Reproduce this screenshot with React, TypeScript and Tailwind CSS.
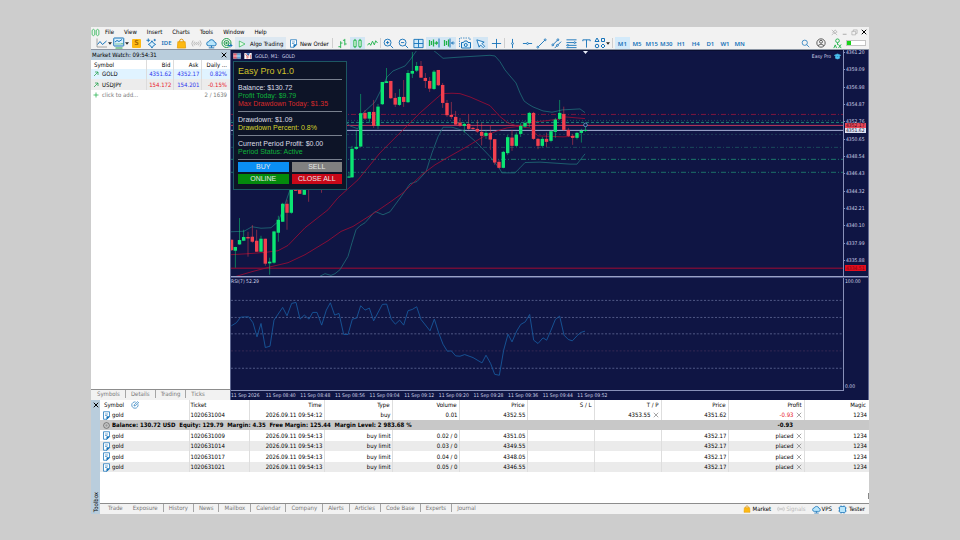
import React from "react";

type Kids = { children?: React.ReactNode };

/* ---------- icons ---------- */

function Icon({ children, className = "size-[11px]" }: Kids & { className?: string }) {
  return (
    <svg viewBox="0 0 24 24" fill="none" stroke="currentColor" strokeWidth={2} className={`shrink-0 ${className}`} aria-hidden="true">
      {children}
    </svg>
  );
}

const Caret = () => (
  <svg viewBox="0 0 8 5" className="h-[3px] w-[4px] shrink-0 text-neutral-800" aria-hidden="true">
    <path d="M0 0h8L4 5z" fill="currentColor" />
  </svg>
);

const Bag = ({ className }: { className?: string }) => (
  <Icon className={className}>
    <path d="M8 9V6.500a4 4 0 0 1 8 0V9" stroke="#d98e00" />
    <path d="M4 8h16l1 14H3z" fill="#fdb913" stroke="#e39b00" strokeWidth={1.500} />
  </Icon>
);

const Cloud = ({ className }: { className?: string }) => (
  <Icon className={className}>
    <path d="M6 17a4.500 4.500 0 0 1 0-9 6.500 6.500 0 0 1 12.500 1A4 4 0 0 1 18 17z" fill="#b9e6fb" stroke="#1673b9" />
    <path d="M12 17v4M6 21.500h12" stroke="#1673b9" />
  </Icon>
);

const DocIcon = () => (
  <Icon className="size-[9px] text-[#1673b9]">
    <path d="M4 2h16v13l-7 7H4z" fill="#fff" />
    <path d="M8 8h8M8 12h6" strokeWidth={1.600} />
    <path d="M20 15l-7 7v-7z" fill="#1673b9" />
  </Icon>
);

const Signal = ({ className }: { className?: string }) => (
  <Icon className={className}>
    <circle cx="12" cy="12" r="2" />
    <path d="M8 8a6 6 0 0 0 0 8M16 8a6 6 0 0 1 0 8M4.500 5.500a10 10 0 0 0 0 13M19.500 5.500a10 10 0 0 1 0 13" />
  </Icon>
);

const Cross = () => (
  <Icon className="size-[6px]">
    <path d="M3 3l18 18M21 3L3 21" strokeWidth={4} />
  </Icon>
);

function Tool({ label, active, wide, children }: Kids & { label: string; active?: boolean; wide?: boolean }) {
  return (
    <button
      type="button"
      aria-label={label}
      className={`flex h-[12px] items-center justify-center ${wide ? "w-[17px]" : "w-[15px]"} ${active ? "bg-[#d3e6f4]" : ""}`}
    >
      {children}
    </button>
  );
}

const Sep = () => <span className="h-[10px] w-px bg-[#cfcfcf]" />;

/* ---------- menu and toolbar ---------- */

const menus = ["File", "View", "Insert", "Charts", "Tools", "Window", "Help"];
const frames = ["M1", "M5", "M15", "M30", "H1", "H4", "D1", "W1", "MN"];

function MenuBar() {
  return (
    <nav className="flex h-[10px] items-center bg-[#f2f2f2] pr-[2px] text-black">
      <Icon className="mr-[5px] size-[9px] text-[#21b24b]">
        <path d="M3 6q4-5 7 0v12q-4 5-7 0zM14 6q4-5 7 0v12q-4 5-7 0z" />
      </Icon>
      <div className="flex gap-[10px]">
        {menus.map((m) => (
          <button key={m} type="button">{m}</button>
        ))}
      </div>
      <div className="ml-auto flex items-center gap-[3px]">
        <button type="button" aria-label="Pin" className="text-neutral-400">
          <Icon className="size-[7px]"><path d="M3 3l18 18M14 3l7 7-5 2-4 5-6-6 5-3zM8 15l-5 6" /></Icon>
        </button>
        <button type="button" aria-label="Minimize" className="text-neutral-400">
          <Icon className="size-[7px]"><path d="M6 18h13" strokeWidth={3} /></Icon>
        </button>
        <button type="button" aria-label="Restore" className="text-neutral-400">
          <Icon className="size-[7px]"><path d="M3 8h13v12H3zM8 8V3h13v12h-5" /></Icon>
        </button>
        <button type="button" aria-label="Close" className="text-black"><Cross /></button>
      </div>
    </nav>
  );
}

function Toolbar() {
  return (
    <div className="flex h-[13px] items-center border-b border-[#8b95a3] bg-[#f2f2f2] text-[#1673b9]">
      <div className="ml-[4px] flex items-center">
        <Tool label="Line studies" wide>
          <Icon className="size-[12px]"><path d="M2 3v17h20" stroke="#888" strokeWidth={1.500} /><path d="M3 15l5-6 5 6 8-7" /></Icon>
          <Caret />
        </Tool>
        <Tool label="Chart templates" wide>
          <Icon className="size-[12px]"><rect x="1.500" y="2" width="20" height="16" rx="1" fill="#d9effb" /><path d="M4 10l4-3 4 2 6-4" /><path d="M5 22h14M6 15v-2M10 15v-2M14 15v-2M18 15v-3" stroke="#21a04b" /></Icon>
          <Caret />
        </Tool>
        <Tool label="Symbols">
          <span className="flex size-[9px] items-center justify-center rounded-[1px] bg-[#fdb913] text-[7px] leading-none font-bold text-[#a86a00]">S</span>
        </Tool>
        <Tool label="Settings">
          <Icon><path d="M13 6l3 5 5 3-5 3-3 5-3-5-5-3 5-3z" fill="#d9effb" /><path d="M5 1v8M1 5h8M19 2v5M16.500 4.500h5" /></Icon>
        </Tool>
        <Tool label="MetaEditor IDE"><span className="font-['Noto_Sans',sans-serif] font-semibold">IDE</span></Tool>
        <Tool label="Market"><Bag className="size-[11px]" /></Tool>
        <Tool label="Signals"><span className="text-[#b5b5b5]"><Signal className="size-[11px]" /></span></Tool>
        <Tool label="Virtual hosting"><Cloud className="size-[11px]" /></Tool>
        <Tool label="Copy trading">
          <Icon className="size-[12px] text-[#21a04b]"><circle cx="11" cy="12" r="9" /><circle cx="11" cy="12" r="5" /><circle cx="11" cy="12" r="1.500" fill="currentColor" /><path d="M13 17h9M18 13l4 4-4 4" stroke="#1673b9" /></Icon>
        </Tool>
      </div>
      <button type="button" className="ml-px flex h-[12px] w-[51px] items-center gap-[4px] bg-[#dde8f1] pt-px pl-[3px] whitespace-nowrap text-black">
        <Icon className="size-[8px] text-[#21b24b]"><path d="M4 3l17 9-17 9z" fill="#e5fbe9" /></Icon>
        Algo Trading
      </button>
      <button type="button" className="ml-px flex h-[12px] w-[45px] items-center gap-[2px] pt-px pl-[2px] whitespace-nowrap text-black">
        <DocIcon />
        New Order
      </button>
      <Sep />
      <div className="ml-[2px] flex items-center">
        <Tool label="Bar chart"><Icon className="size-[11px] text-[#21b24b]"><path d="M8 7v15M3 19h5M8 11h4M17 2v14M13 5h4M17 13h4" /></Icon></Tool>
        <Tool label="Candlestick chart" active><Icon className="size-[11px] text-[#21b24b]"><path d="M4 5h5v14H4zM15 5h5v14h-5zM6.500 2v3M6.500 19v3M17.500 2v3M17.500 19v3" fill="#e5fbe9" /></Icon></Tool>
        <Tool label="Line chart"><Icon className="size-[11px] text-[#21b24b]"><path d="M1 16l4-5 3 5 4-9 4 8 3-9 4 5" /></Icon></Tool>
        <Sep />
        <Tool label="Zoom in"><Icon><circle cx="10" cy="10" r="7.500" /><path d="M16 16l6 6M6.500 10h7M10 6.500v7" /></Icon></Tool>
        <Tool label="Zoom out"><Icon><circle cx="10" cy="10" r="7.500" /><path d="M16 16l6 6M6.500 10h7" /></Icon></Tool>
        <Tool label="Tile windows"><Icon><path d="M2 3h20v18H2zM12 3v18M2 12h20" fill="#cfeafa" /></Icon></Tool>
        <Tool label="Auto scroll" active><Icon className="size-[12px] text-[#21b24b]"><path d="M3 6v12M7 8v8M11 5v14M13 12h6M16 9l3 3-3 3" strokeWidth={2.500} /><path d="M22 3v18" stroke="#1673b9" /></Icon></Tool>
        <Tool label="Chart shift" active><Icon className="size-[12px] text-[#21b24b]"><path d="M3 6v12M7 8v8M11 5v14" strokeWidth={2.500} /><path d="M14 3v18M23 12h-6M20 9l-3 3 3 3" stroke="#1673b9" /></Icon></Tool>
      </div>
      <div className="ml-px flex items-center gap-px">
        <Tool label="Screenshot"><Icon className="size-[12px]"><path d="M1 20V2h21v5" strokeDasharray="3 2" strokeWidth={1.500} /><path d="M5 11h4l2-3h5l2 3h5v11H5z" fill="#d9effb" /><circle cx="13.500" cy="16" r="3" /></Icon></Tool>
        <Tool label="Cursor" active><Icon><path d="M4 4l16 5-5 3 6 6-3 3-6-6-3 5z" fill="#eaf6fd" /></Icon></Tool>
        <Tool label="Crosshair"><Icon><path d="M12 2v20M2 12h20" /></Icon></Tool>
      </div>
      <Sep />
      <div className="grid w-[103px] grid-cols-7">
        <Tool label="Vertical line"><Icon><path d="M12 2v20" /><circle cx="12" cy="12" r="2" fill="#fff" /></Icon></Tool>
        <Tool label="Horizontal line"><Icon><path d="M2 12h20" /><circle cx="12" cy="12" r="2" fill="#fff" /></Icon></Tool>
        <Tool label="Trend line"><Icon><path d="M3 21L21 3" /><circle cx="4" cy="20" r="2" fill="#fff" /><circle cx="20" cy="4" r="2" fill="#fff" /></Icon></Tool>
        <Tool label="Channel"><Icon><path d="M2 17L16 3M8 22L22 8" /><circle cx="4" cy="15" r="2" fill="#fff" /><circle cx="15" cy="4" r="2" fill="#fff" /><circle cx="14" cy="16" r="2" fill="#fff" /></Icon></Tool>
        <Tool label="Fibonacci"><Icon><path d="M1 4h22M1 10h22M1 16h22M1 21h22" /><circle cx="4" cy="16" r="1.800" fill="#fff" /><circle cx="19" cy="10" r="1.800" fill="#fff" /></Icon></Tool>
        <Tool label="Text"><Icon><path d="M4 7V4h16v3M12 4v17" /></Icon></Tool>
        <Tool label="Shapes" wide>
          <Icon className="size-[12px]"><path d="M6 2l4 7H2zM15 3h6v6h-6z" strokeWidth={2} /><circle cx="6" cy="18" r="3.500" strokeWidth={2} /><path d="M18 14l4 4-4 4-4-4z" strokeWidth={2} /></Icon>
          <Caret />
        </Tool>
      </div>
      <span className="ml-[4px] flex"><Sep /></span>
      <div className="ml-[2px] grid w-[132px] grid-cols-9 font-['Noto_Sans',sans-serif] font-semibold">
        {frames.map((f) => (
          <button key={f} type="button" className={`h-[12px] pt-px text-center ${f === "M1" ? "bg-[#d3eafa]" : ""}`}>{f}</button>
        ))}
      </div>
      <div className="ml-auto flex items-center pr-[3px]">
        <Tool label="Search"><Icon className="size-[9px]"><circle cx="10" cy="10" r="7" /><path d="M15 15l7 7" /></Icon></Tool>
        <Tool label="Account"><Icon className="size-[10px] text-neutral-700"><circle cx="12" cy="12" r="10" /><circle cx="12" cy="9" r="3.500" /><path d="M5 18q7-7 14 0" /></Icon></Tool>
        <span className="mr-[3px] ml-[4px] flex text-[#21b24b]">
          <Icon className="size-[11px]"><circle cx="12" cy="6" r="4" /><path d="M12 10v5M4 22l3-7 3 7M14 14l6 8M20 14l-6 8" /></Icon>
        </span>
        <span className="flex h-[6px] w-[20px] border border-[#c4c4c4] bg-white">
          <span className="w-[4px] bg-[#19d319]" />
        </span>
      </div>
    </div>
  );
}

/* ---------- market watch ---------- */

function MarketWatch() {
  return (
    <aside className="flex w-[139px] shrink-0 flex-col bg-white text-black">
      <header className="flex h-[10px] items-center justify-between bg-[#b9cddc] pr-[3px] pl-px">
        <h2>Market Watch: 09:54:31</h2>
        <button type="button" aria-label="Close Market Watch"><Cross /></button>
      </header>
      <table className="w-full table-fixed border-collapse">
        <colgroup>
          <col className="w-[55px]" /><col className="w-[27px]" /><col className="w-[28px]" /><col className="w-[29px]" />
        </colgroup>
        <thead>
          <tr className="h-[9px] text-right">
            <th className="border-r border-[#dcdcdc] p-0 pl-[3px] text-left font-normal">Symbol</th>
            <th className="border-r border-[#dcdcdc] p-0 pr-[2px] font-normal">Bid</th>
            <th className="border-r border-[#dcdcdc] p-0 pr-[2px] font-normal">Ask</th>
            <th className="p-0 pr-[3px] font-normal whitespace-nowrap">Daily ...</th>
          </tr>
        </thead>
        <tbody className="text-right">
          <tr className="h-[10px] bg-[#e0f3ff] text-[#2a35ee]">
            <td className="border-r border-[#dcdcdc] text-left text-black"><SymbolCell name="GOLD" /></td>
            <td className="border-r border-[#dcdcdc] pr-px">4351.62</td>
            <td className="border-r border-[#dcdcdc] pr-px">4352.17</td>
            <td className="pr-[3px]">0.82%</td>
          </tr>
          <tr className="h-[11px] bg-[#ececec] text-[#e8182a]">
            <td className="border-r border-[#dcdcdc] text-left text-black"><SymbolCell name="USDJPY" /></td>
            <td className="border-r border-[#dcdcdc] pr-px">154.172</td>
            <td className="border-r border-[#dcdcdc] pr-px text-[#2a35ee]">154.201</td>
            <td className="pr-[3px]">-0.15%</td>
          </tr>
          <tr className="h-[10px] text-[#777]">
            <td className="text-left">
              <span className="flex items-center gap-[3px] pl-[2px]">
                <Icon className="size-[6px] text-[#21b24b]"><path d="M12 2v20M2 12h20" strokeWidth={3} /></Icon>
                click to add...
              </span>
            </td>
            <td colSpan={3} className="pr-[3px]">2 / 1639</td>
          </tr>
        </tbody>
      </table>
      <div className="mt-auto flex h-[11px] items-center border-t border-[#8d8d8d] bg-[#f2f2f2] pb-[2px] pl-px text-[#777]">
        {["Symbols", "Details", "Trading", "Ticks"].map((t, i) => (
          <button key={t} type="button" className={`h-[8px] px-[5px] ${i < 3 ? "border-r border-[#a5a5a5]" : ""}`}>{t}</button>
        ))}
      </div>
    </aside>
  );
}

function SymbolCell({ name }: { name: string }) {
  return (
    <span className="flex items-center gap-[3px] pl-[2px]">
      <Icon className="size-[6px] text-[#21a04b]"><path d="M4 20L20 4M8 4h12v12" strokeWidth={3} /></Icon>
      {name}
    </span>
  );
}

/* ---------- chart ---------- */

// Each bar: centre x, body top, body bottom, wick top, wick bottom, 1 for a rising bar
const bars: [number, number, number, number, number, number][] = [
  [231.5, 240, 250.5, 240, 251, 0], [235.3, 247.3, 251, 247, 268, 1], [239.5, 240.3, 244.7, 218.3, 245, 1],
  [243.7, 237.3, 241, 230, 241, 1], [248, 237.3, 238.7, 232, 257, 0], [252.3, 237, 242, 225.3, 243, 0],
  [256.7, 241, 252, 230, 252, 0], [261, 239, 252, 236, 252, 1], [265.3, 239, 264, 239, 266, 0],
  [269.7, 262, 263.7, 258, 275, 1], [274, 231.7, 263, 231, 264, 1], [278.3, 220, 233, 216, 242, 1],
  [282.7, 204, 222, 203, 222, 1], [287, 204, 213, 200, 230, 0], [291.3, 188, 213, 188, 214, 1],
  [295.7, 188, 191, 188, 191, 0], [299.7, 188, 194, 188, 194, 0], [304.3, 188, 195, 188, 195, 1],
  [308.7, 188, 189, 188, 202, 0], [321.5, 188, 189, 188, 193, 0], [349, 176.7, 177.8, 172, 178, 1],
  [352, 149, 177.5, 146, 178, 1], [356.3, 147, 149, 131, 150, 1], [360.7, 113.3, 146.7, 94, 147, 1],
  [365, 113, 118.7, 110, 120, 0], [369.3, 112, 118.7, 112, 123, 1], [373.7, 112, 126, 100, 128, 0],
  [378, 106.7, 126, 104, 129, 1], [382.3, 82, 104.3, 82, 105, 1], [386.5, 81.3, 83, 68, 83, 1],
  [390.8, 81, 98.3, 81, 99, 0], [395.2, 98, 104.7, 93, 107, 0], [399.4, 97, 105, 89, 106, 1],
  [403.7, 97, 102, 80, 107, 0], [408, 73, 102.3, 70, 103, 1], [412.3, 71, 73.7, 52, 78, 1],
  [416.7, 66, 70.7, 62, 72, 1], [421, 66, 77.7, 61, 78, 0], [425.3, 78, 81, 73, 88, 0],
  [429.7, 81, 88.7, 77, 92, 0], [434, 71.7, 89, 70, 90, 1], [438.3, 70, 85.3, 70, 86, 0],
  [442.7, 85, 103, 83, 108, 0], [447, 103, 115.3, 100, 117, 0], [451.3, 115, 117, 102, 119, 0],
  [455.7, 117, 124.7, 111, 125, 0], [460, 122.7, 125.7, 118, 127, 0], [464.3, 124, 126, 122.5, 132.5, 1],
  [468.7, 124, 129, 114, 130, 0], [473, 128, 129.2, 127, 130, 0], [477.3, 129, 131.7, 120, 133, 0],
  [481.7, 132, 136, 123, 145.5, 0], [486, 133, 136, 130, 139, 1], [490.3, 133, 139.7, 126, 150, 0],
  [494.7, 139.3, 162.7, 139, 165, 0], [499, 162, 168, 160, 168.5, 0], [503.3, 152, 168, 151, 168.5, 1],
  [507.7, 137.3, 153.3, 135, 155, 1], [512, 137.7, 146, 130, 151, 0], [516.3, 134.7, 146, 132.5, 147, 1],
  [520.7, 126, 134, 123, 137, 1], [525, 123, 126.7, 121, 128, 1], [529.3, 113, 123.3, 112, 127, 1],
  [533.5, 113, 139, 112, 140, 0], [538, 139, 146, 138, 149.3, 0], [542.3, 139, 146, 137, 148, 1],
  [546.5, 139, 142, 132.7, 147, 0], [551, 131.3, 141, 130, 142.5, 1], [555.3, 119.7, 132, 118, 138, 1],
  [559.7, 113, 119, 100, 120, 1], [563.8, 114, 130, 106.7, 131, 0], [568.3, 130, 136, 128, 137, 0],
  [572.7, 136, 138, 134, 145, 0], [577, 133, 138, 132, 139.5, 1], [581.3, 131, 133, 129, 142.7, 1],
  [585.5, 130, 131, 126, 132, 1],
];

const upperBand =
  "231,232 244,231.5 252,227 261,228.5 271,228 278,222 283,210 290,190 330,150 347,123 350,126 358,129 361,115 375,102 381,90 387,77 393,71 405,66 410,60 417,50";
const upperBand2 =
  "433,50 438,54 443,58.3 457,57.3 490,55.3 495,56 500,61.7 505,70 510,76 516,83 520,93 524,101 528,104 533,107 543,111 552,112.3 558,111 562,110 580,109 585,112.7";
const lowerBand =
  "319.7,276.700 325,274 331,275.700 335,274 340,270 348,256.700 352,243 356,230 360,226 365,223 375,211.700 383,215 390,212 401,197 410,184 417,181.700 426,172 432,153 438,137 443,127.300 452,127.300 463,130.700 477,143 490,156.700 499,168 502,173 515,173 520,168 525,162.700 540,162.300 570,164.300 577,164.300 585,154";
const fastAverage =
  "231,255 248,254 265,252.700 278,251 288,245.700 305,228 328,210 338,198 358,180 380,153 400,133 420,113 437,98 442,93.700 452,93.300 460,93.700 470,97 490,105.700 500,116.700 508,123 517,126 525,125 533,122 545,121 560,119 565,117 585,118.700";
const slowAverage =
  "236,276.700 253,271.700 271,267 288,263 305,255 328,241 341,231.700 353,226.700 375,212.700 391,201.700 403,193 421.700,175 435,165 447,158 467,146.700 483,137 497,131 507,128 517,126.700 530,128 538,136 563,137 580,136";

const levels = [
  { y: 114.5, color: "#7d153e", dash: "5 2 1 2" },
  { y: 120.5, color: "#24475f", dash: "1 2" },
  { y: 122.5, color: "#1c8a74", dash: "3 2" },
  { y: 125.5, color: "#c0385c", dash: "" },
  { y: 130.5, color: "#a9b2d6", dash: "" },
  { y: 134.5, color: "#1d3a55", dash: "2 2" },
  { y: 147.5, color: "#1b4a5c", dash: "4 2 1 2" },
  { y: 159.5, color: "#1c766c", dash: "5 2 1 2" },
  { y: 172.5, color: "#1c6e68", dash: "5 2 1 2" },
  { y: 268.5, color: "#a30b33", dash: "" },
];

const rsiShape = [
  10, 167, 25, 158, 38, 141, 62, 140, 75, 158, 87, 200, 99, 160, 112, 232, 126, 228, 138, 150, 164, 112, 177, 137, 191, 100,
  204, 97, 216, 147, 229, 135, 243, 147, 254, 127, 267, 127, 281, 165, 295, 120, 307, 98, 320, 135, 333, 130, 347, 193,
  360, 193, 373, 147, 386, 144, 398, 107, 411, 120, 424, 114, 437, 152, 463, 103, 476, 102, 490, 148, 502, 162, 515, 150,
  527, 165, 540, 122, 553, 118, 566, 110, 579, 148, 606, 182, 619, 147, 632, 188, 645, 222, 658, 243, 670, 242, 683, 257,
  696, 258, 710, 253, 735, 262, 762, 278, 774, 255, 788, 280, 800, 312, 814, 315, 827, 240, 840, 192, 852, 215, 866, 183,
  878, 163, 892, 155, 905, 133, 917, 210, 930, 220, 945, 203, 956, 210, 969, 180, 982, 148, 995, 138, 1008, 195, 1021, 208,
  1033, 212, 1048, 196, 1058, 187, 1071, 183,
];
const rsiLine = rsiShape.map((v, i) => (i % 2 ? `${v} ` : `${v},`)).join("");

const prices = ["4361.20", "4359.09", "4356.98", "4354.87", "4352.76", "4350.65", "4348.54", "4346.43", "4344.32", "4342.21", "4340.10", "4337.99", "4335.88"];
const times = ["11 Sep 2026", "11 Sep 08:40", "11 Sep 08:48", "11 Sep 08:56", "11 Sep 09:04", "11 Sep 09:12", "11 Sep 09:20", "11 Sep 09:28", "11 Sep 09:36", "11 Sep 09:44", "11 Sep 09:52"];

function PricePlot() {
  return (
    <svg viewBox="231 51 612 225" preserveAspectRatio="none" className="block h-full w-full" role="img" aria-label="GOLD, M1 candlestick chart">
      {levels.map((l) => (
        <line key={l.y} x1="231" x2="843" y1={l.y} y2={l.y} stroke={l.color} strokeDasharray={l.dash || undefined} />
      ))}
      <g fill="none" strokeWidth={0.8}>
        <polyline points={upperBand} stroke="#1f6f78" />
        <polyline points={upperBand2} stroke="#1f6f78" />
        <polyline points={lowerBand} stroke="#1f6f78" />
        <polyline points={fastAverage} stroke="#a30b33" />
        <polyline points={slowAverage} stroke="#a30b33" />
      </g>
      {bars.map(([x, top, bottom, high, low, up]) => (
        <g key={x} fill={up ? "#0be573" : "#f2404f"}>
          <rect x={x - 0.4} y={high} width={0.8} height={low - high} opacity={0.6} />
          <rect x={x - 1.7} y={top} width={3.4} height={bottom - top} />
        </g>
      ))}
      <circle cx="585.500" cy="125" r="1.800" fill="#0f1544" stroke="#6fa8d8" strokeWidth={0.8} />
      <path d="M583 51h5l-2.500 3z" fill="#e8ecf8" />
    </svg>
  );
}

function RsiPlot() {
  return (
    <svg viewBox="9 24 1836 336" preserveAspectRatio="none" className="block h-full w-full" role="img" aria-label="Relative strength index">
      {[91, 142, 191, 242, 294].map((y) => (
        <line key={y} x1="9" x2="1845" y1={y} y2={y} stroke={y === 242 ? "#3b2b55" : "#5a6390"} strokeWidth={2.6} strokeDasharray="6 5" />
      ))}
      <polyline points={rsiLine} fill="none" stroke="#175a9e" strokeWidth={2.6} />
    </svg>
  );
}

const Rule = () => <hr className="border-[#78808e]" />;

function EasyPanel() {
  const button = "h-[10px] text-center text-[7px] leading-[10px] text-[#e8e8e8]";
  return (
    <section className="absolute top-[10px] left-[2px] w-[114px] border border-[#1d5763] bg-[#0d1427] px-[4px] pt-[2px] pb-[5px] font-['Liberation_Sans',Arial,sans-serif] text-[7px] leading-[8px] whitespace-nowrap text-[#dcdfe6]">
      <h1 className="h-[15px] text-[9px] leading-[14px] text-[#cdc02a]">Easy Pro v1.0</h1>
      <Rule />
      <div className="h-[31px] pt-[4px]">
        <p>Balance: $130.72</p>
        <p className="text-[#0db33b]">Profit Today: $9.79</p>
        <p className="text-[#d92a2a]">Max Drawdown Today: $1.35</p>
      </div>
      <Rule />
      <div className="h-[23px] pt-[4px]">
        <p>Drawdown: $1.09</p>
        <p className="text-[#d6d32b]">Drawdown Percent: 0.8%</p>
      </div>
      <Rule />
      <div className="h-[23px] pt-[4px]">
        <p>Current Period Profit: $0.00</p>
        <p className="text-[#0db33b]">Period Status: Active</p>
      </div>
      <Rule />
      <div className="mt-[2px] grid grid-cols-2 gap-x-[3px] gap-y-[2px]">
        <button type="button" className={`bg-[#0a8ff5] ${button}`}>BUY</button>
        <button type="button" className={`bg-[#808080] ${button}`}>SELL</button>
        <button type="button" className={`bg-[#048a0c] ${button}`}>ONLINE</button>
        <button type="button" className={`bg-[#c80818] ${button}`}>CLOSE ALL</button>
      </div>
    </section>
  );
}

function Chart() {
  return (
    <main className="flex min-w-0 flex-1 flex-col border-x border-[#5d6690] bg-[#0f1544] text-[5px] text-[#cfd4e8]">
      <div className="flex min-h-0 flex-[225]">
        <div className="relative min-w-0 flex-1 border-t border-[#0a0e30]">
          <div className="absolute inset-0"><PricePlot /></div>
          <div className="relative flex h-[10px] items-center gap-[3px] px-[2px]">
            <Icon className="size-[8px]"><path d="M1 4h10v16H1z" fill="#e85b6b" stroke="#fff" strokeWidth={1} /><path d="M13 4h10v16H13z" fill="#5ba4d9" stroke="#fff" strokeWidth={1} /><path d="M1 12h22" stroke="#fff" /></Icon>
            <Icon className="size-[8px]"><path d="M1 3h22v18H1z" fill="#fff" stroke="none" /><path d="M4 5l5 8v7M12 5v14M19 8v12" stroke="#c33" /><path d="M6 4h12l-5 7z" fill="#2463b5" stroke="none" /></Icon>
            <span>GOLD, M1:&nbsp; GOLD</span>
            <span className="ml-auto">Easy Pro</span>
            <Icon className="size-[7px] text-[#4cc3f0]"><path d="M1 8l11-5 11 5-11 5zM5 11v7q7 5 14 0v-7" fill="currentColor" /></Icon>
          </div>
          <EasyPanel />
        </div>
        <div className="relative w-[25px] shrink-0 border-l border-[#8890b8]">
          <div className="flex h-[213px] flex-col justify-between">
            {prices.map((p) => (
              <span key={p} className="flex h-[5px] items-center leading-[5px] before:mr-px before:h-px before:w-[1px] before:bg-[#8890b8]">{p}</span>
            ))}
          </div>
          <span className="absolute top-[73px] left-px h-[5px] w-[21px] bg-[#e8475a] pl-px leading-[5px] text-[#3d0510]">4352.17</span>
          <span className="absolute top-[78px] left-px h-[5px] w-[21px] bg-[#dfe3f3] pl-px leading-[5px] text-[#1a1f45]">4351.62</span>
          <span className="absolute top-[215px] left-px h-[6px] w-[21px] bg-[#e30d1e] pl-px leading-[6px] text-[#7c0610]">4334.51</span>
        </div>
      </div>
      <div className="h-[2px] border-t border-[#9aa2c6] bg-[#4a5284]" />
      <div className="flex min-h-0 flex-[112]">
        <div className="relative min-w-0 flex-1">
          <div className="absolute inset-0"><RsiPlot /></div>
          <span className="relative block leading-[7px]">RSI(7) 52.29</span>
        </div>
        <div className="flex w-[25px] shrink-0 flex-col justify-between border-l border-[#8890b8] pl-px leading-[7px]">
          <span>100.00</span>
          <span>0.00</span>
        </div>
      </div>
      <div className="mr-[24px] h-px bg-[#8890b8]" />
      <div className="grid h-[9px] w-[381px] grid-cols-11 items-start leading-[8px] whitespace-nowrap">
        {times.map((t) => <span key={t}>{t}</span>)}
      </div>
    </main>
  );
}

/* ---------- toolbox ---------- */

const orders = [
  { ticket: "1020631009", volume: "0.02 / 0", price: "4351.05" },
  { ticket: "1020631014", volume: "0.03 / 0", price: "4349.55" },
  { ticket: "1020631017", volume: "0.04 / 0", price: "4348.05" },
  { ticket: "1020631021", volume: "0.05 / 0", price: "4346.55" },
];

const tabs = ["Trade", "Exposure", "History", "News", "Mailbox", "Calendar", "Company", "Alerts", "Articles", "Code Base", "Experts", "Journal"];

function Removable({ children }: Kids) {
  return (
    <span className="flex items-center justify-end gap-[2px] pr-px">
      {children}
      <button type="button" aria-label="Remove" className="text-[#888]">
        <Icon className="size-[6px]"><path d="M3 3l18 18M21 3L3 21" strokeWidth={3} /></Icon>
      </button>
    </span>
  );
}

function TradeTable() {
  const cell = "border-r border-[#dedede] p-0 pr-px";
  const head = "border-r border-[#dedede] p-0 pr-[2px] font-normal";
  return (
    <table className="w-full table-fixed border-collapse text-right whitespace-nowrap">
      <colgroup>
        <col className="w-[89px]" /><col className="w-[60px]" /><col className="w-[75px]" /><col className="w-[68px]" />
        <col className="w-[67px]" /><col className="w-[68px]" /><col className="w-[67px]" /><col className="w-[67px]" />
        <col className="w-[67px]" /><col className="w-[76px]" /><col className="w-[65px]" />
      </colgroup>
      <thead>
        <tr className="h-[10px]">
          <th className={head}>
            <span className="flex items-center gap-[7px] pl-[4px]">
              Symbol
              <Icon className="size-[8px] text-[#1673b9]"><path d="M21 10a9.500 9.500 0 1 1-7-7M9 15l1-4 10-9 3 3-10 9z" /></Icon>
            </span>
          </th>
          <th className={`${head} pl-px text-left`}>Ticket</th>
          {["Time", "Type", "Volume", "Price", "S / L", "T / P", "Price", "Profit"].map((h, i) => (
            <th key={i} className={head}>{h}</th>
          ))}
          <th className="p-0 pr-[3px] font-normal">Magic</th>
        </tr>
      </thead>
      <tbody>
        <tr className="h-[10px]">
          <td className={cell}><span className="flex items-center gap-px pl-[2px]"><DocIcon />gold</span></td>
          <td className={`${cell} pl-px text-left`}>1020631004</td>
          <td className={cell}>2026.09.11 09:54:12</td>
          <td className={cell}>buy</td>
          <td className={cell}>0.01</td>
          <td className={cell}>4352.55</td>
          <td className={cell} />
          <td className={cell}><Removable>4353.55</Removable></td>
          <td className={cell}>4351.62</td>
          <td className={cell}><Removable><span className="text-[#e8182a]">-0.93</span></Removable></td>
          <td className="p-0 pr-[2px]">1234</td>
        </tr>
        <tr className="h-[10px] bg-[#c8c8c8] font-bold">
          <td colSpan={9} className="p-0 text-left">
            <span className="flex items-center gap-[2px] pl-[3px]">
              <Icon className="size-[7px] text-[#444]"><circle cx="12" cy="12" r="10" /><circle cx="12" cy="12" r="4" fill="#999" stroke="none" /></Icon>
              <span className="whitespace-pre">Balance: 130.72 USD  Equity: 129.79  Margin: 4.35  Free Margin: 125.44  Margin Level: 2 983.68 %</span>
            </span>
          </td>
          <td className="p-0 pr-[11px]">-0.93</td>
          <td />
        </tr>
        {orders.map((o, i) => (
          <tr key={o.ticket} className={i % 2 ? "h-[10px] bg-[#ebebeb]" : "h-[11px] bg-white"}>
            <td className={cell}><span className="flex items-center gap-px pl-[2px]"><DocIcon />gold</span></td>
            <td className={`${cell} pl-px text-left`}>{o.ticket}</td>
            <td className={cell}>2026.09.11 09:54:13</td>
            <td className={cell}>buy limit</td>
            <td className={cell}>{o.volume}</td>
            <td className={cell}>{o.price}</td>
            <td className={cell} />
            <td className={cell} />
            <td className={cell}>4352.17</td>
            <td className={cell}><Removable>placed</Removable></td>
            <td className="p-0 pr-[2px]">1234</td>
          </tr>
        ))}
      </tbody>
    </table>
  );
}

function Toolbox() {
  return (
    <section className="flex h-[114px] shrink-0 bg-white text-black">
      <div className="flex w-[9px] shrink-0 flex-col items-center justify-between bg-[#b9cddc] pt-[2px] pb-[2px]">
        <button type="button" aria-label="Close Toolbox"><Cross /></button>
        <h2 className="rotate-180 [writing-mode:vertical-rl]">Toolbox</h2>
      </div>
      <div className="flex min-w-0 flex-1 flex-col">
        <TradeTable />
        <div className="mt-auto mb-[4px] ml-auto h-[6px] w-px bg-[#888]" />
        <footer className="flex h-[11px] items-center border-t border-[#8d8d8d] bg-[#f2f2f2] pl-[3px] whitespace-nowrap text-[#777]">
          <div className="flex pb-[2px]">
            {tabs.map((t, i) => (
              <button key={t} type="button" className={`h-[8px] px-[5px] ${i > 0 && i < 11 ? "border-r border-[#a5a5a5]" : ""}`}>{t}</button>
            ))}
          </div>
          <div className="ml-auto flex items-center gap-[6px] pr-[4px] text-black">
            <button type="button" className="flex items-center gap-[2px]"><Bag className="size-[8px]" />Market</button>
            <button type="button" className="flex items-center gap-px text-[#b8b8b8]"><Signal className="size-[8px]" />Signals</button>
            <button type="button" className="flex items-center gap-px"><Cloud className="size-[9px]" />VPS</button>
            <button type="button" className="flex items-center gap-[2px]">
              <Icon className="size-[9px] text-[#1673b9]"><rect x="4" y="4" width="16" height="16" rx="3" fill="#b9e6fb" /><path d="M8 1v3M16 1v3M8 20v3M16 20v3M1 8h3M1 16h3M20 8h3M20 16h3" /></Icon>
              Tester
            </button>
          </div>
        </footer>
      </div>
    </section>
  );
}

export default function App() {
  return (
    <div className="flex h-screen flex-col bg-[#cdcdcd] px-[91px] pt-[27px] pb-[26px] font-['DejaVu_Sans_Condensed','Noto_Sans',sans-serif] text-[6px] leading-[8px]">
      <MenuBar />
      <Toolbar />
      <div className="flex min-h-0 flex-1">
        <MarketWatch />
        <Chart />
      </div>
      <Toolbox />
    </div>
  );
}
